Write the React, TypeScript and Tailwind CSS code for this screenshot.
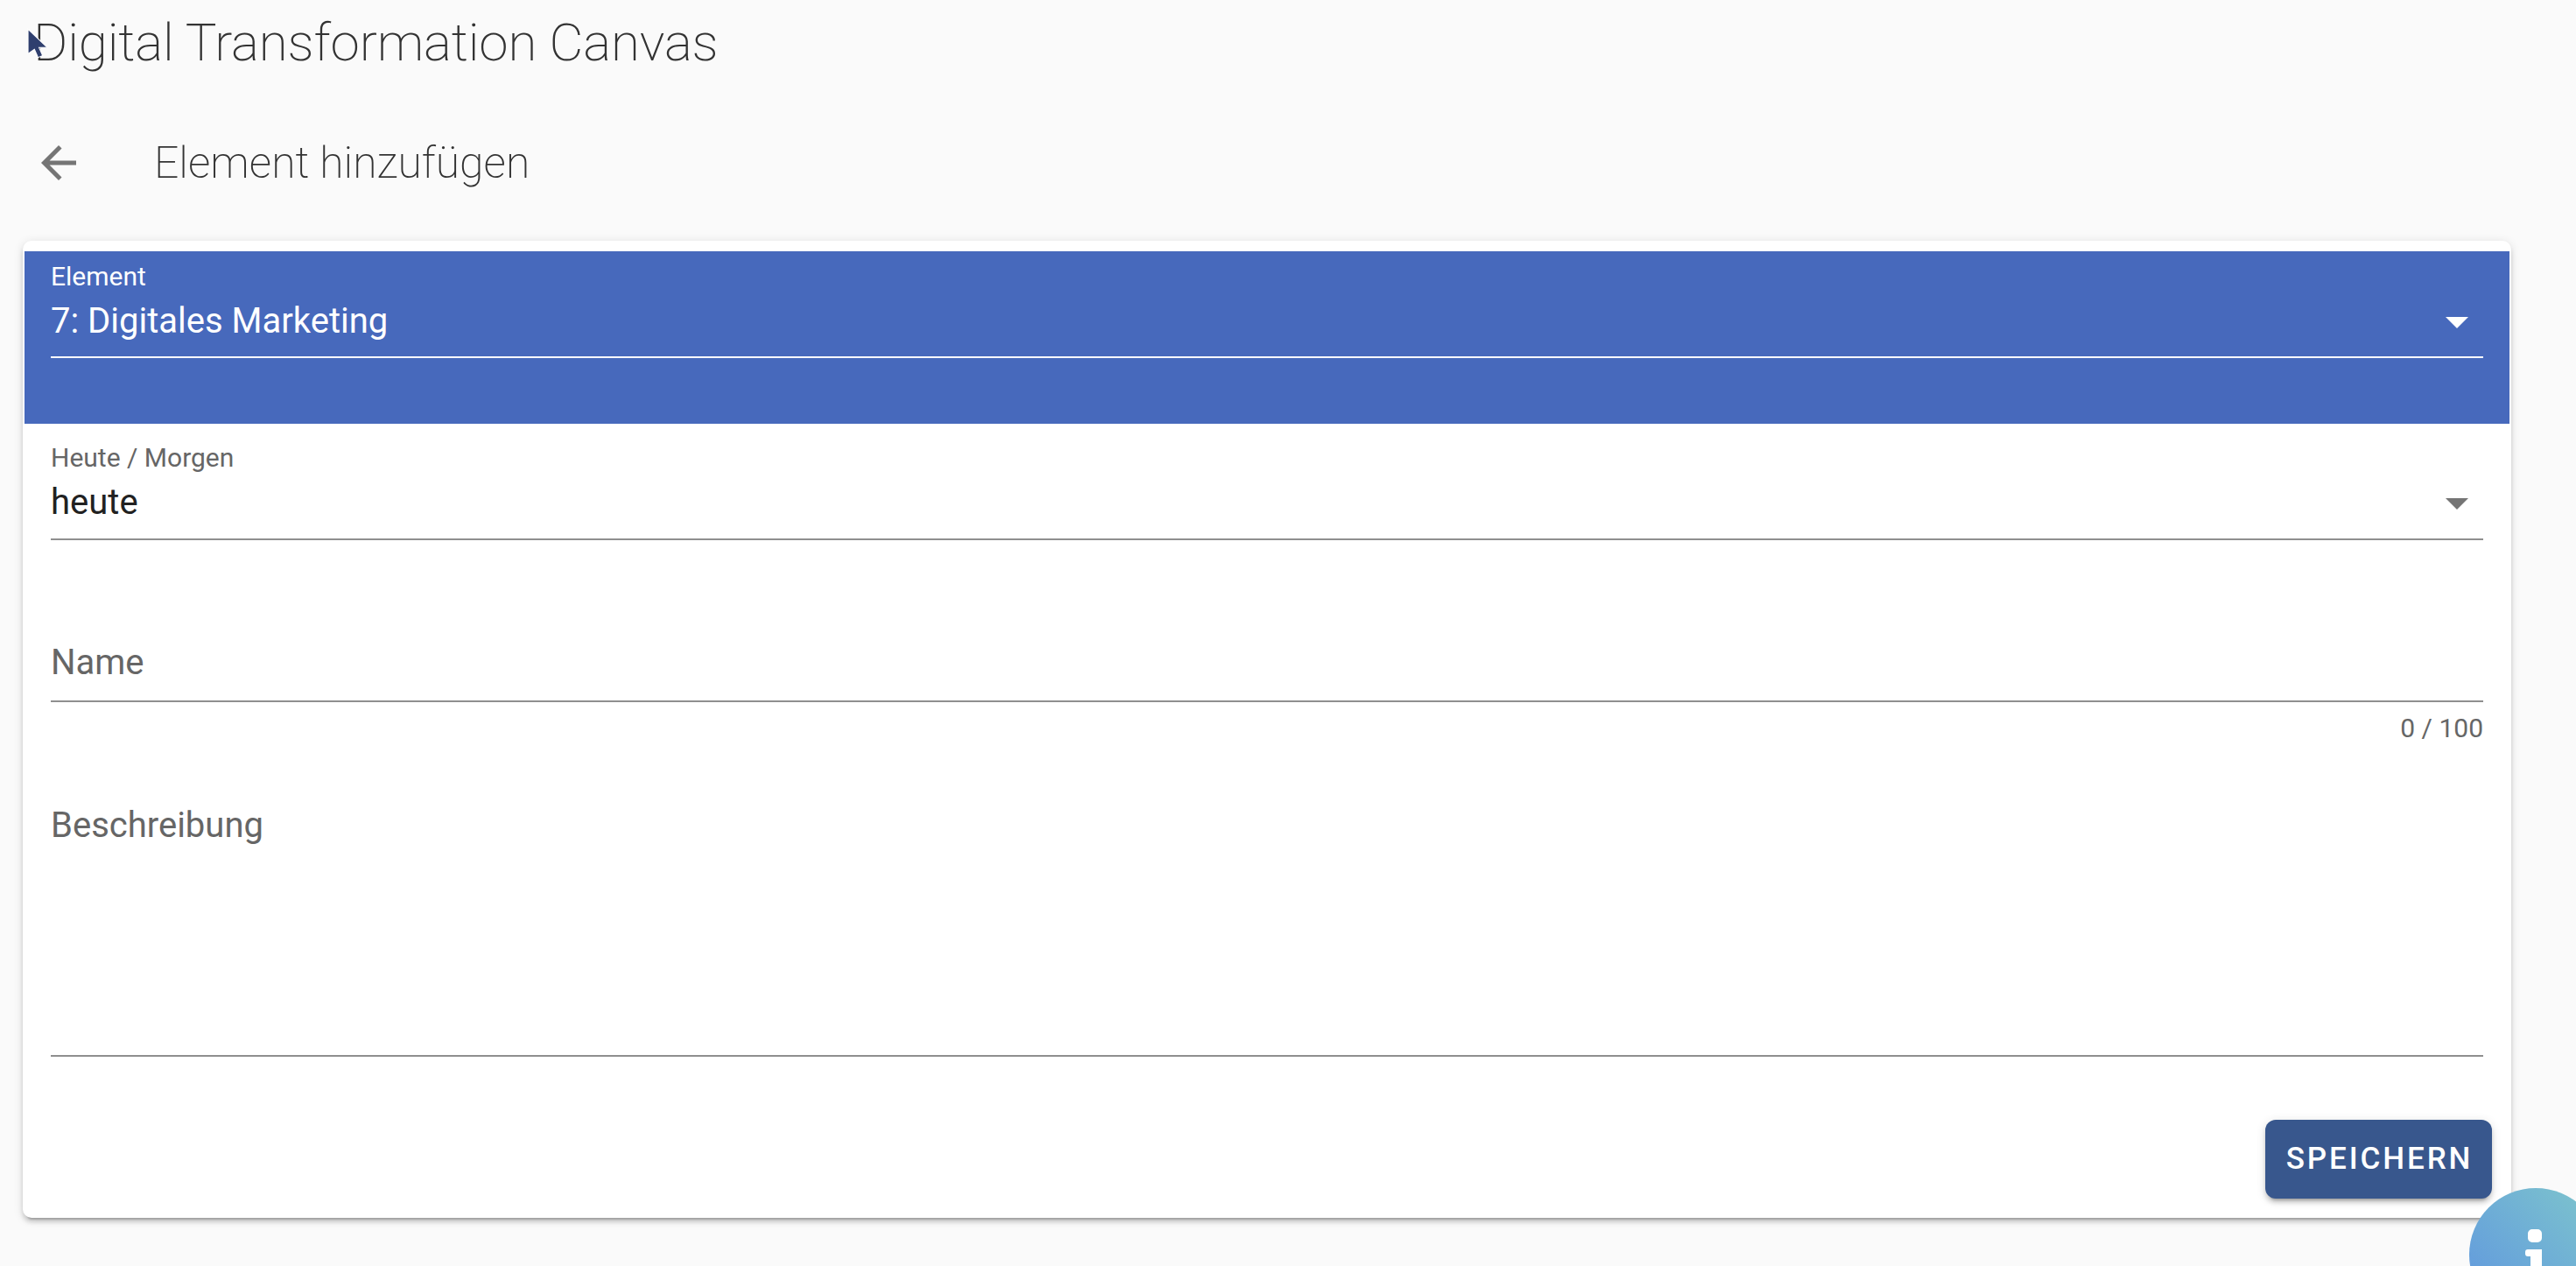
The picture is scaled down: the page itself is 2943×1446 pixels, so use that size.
const FONT = "font-['Roboto','Liberation_Sans',sans-serif]";

function Caret({ className }: { className: string }) {
  return (
    <svg viewBox="0 0 26 13" className={`absolute right-[17px] h-[13px] w-[26px] ${className}`}>
      <path d="M0 0h26L13 13z" fill="currentColor" />
    </svg>
  );
}

function SelectField({
  label,
  value,
  inverted = false,
}: {
  label: string;
  value: string;
  inverted?: boolean;
}) {
  return (
    <div className="relative h-[122px]">
      <div
        className={`h-[36px] text-[30px] leading-[36px] ${inverted ? "text-white" : "text-[#666666]"}`}
      >
        {label}
      </div>
      <div
        className={`mt-[9px] h-[48px] text-[40px] leading-[48px] ${inverted ? "text-white" : "text-[#212121]"}`}
      >
        {value}
      </div>
      <Caret className={`top-[64px] ${inverted ? "text-white" : "text-[#757575]"}`} />
      <div className={`h-[2px] ${inverted ? "mt-[16px] bg-white" : "mt-[17px] bg-[#8f8f8f]"}`} />
    </div>
  );
}

export default function App() {
  return (
    <div className={`relative h-screen w-full overflow-hidden bg-[#fafafa] ${FONT}`}>
      <h1 className="h-[80px] pl-[38px] pt-[14px] text-[60px] font-extralight leading-[70px] tracking-[-0.15px] text-[#333333]">
        Digital Transformation Canvas
      </h1>

      <div className="flex h-[104px] items-center pt-[106px]">
        <svg viewBox="0 0 24 24" className="ml-[37px] h-[60px] w-[60px] text-[#757575]">
          <path
            fill="currentColor"
            d="M20 11H7.83l5.59-5.59L12 4l-8 8 8 8 1.41-1.41L7.83 13H20v-2z"
          />
        </svg>
        <h2 className="ml-[79px] text-[49.8px] font-extralight text-[#333333]">Element hinzufügen</h2>
      </div>

      <div className="ml-[26px] mt-[89px] h-[1116px] w-[2843px] rounded-[10px] bg-white pt-[12px] shadow-[0_7px_2px_-5px_rgba(0,0,0,0.2),0_5px_5px_0_rgba(0,0,0,0.14),0_2px_12px_0_rgba(0,0,0,0.12)]">
        <div className="mx-[2px] h-[197px] bg-[#4769bc] pl-[30px] pr-[30px] pt-[11px]">
          <SelectField label="Element" value="7: Digitales Marketing" inverted />
        </div>

        <div className="px-[32px] pt-[21px]">
          <SelectField label="Heute / Morgen" value="heute" />

          <div className="mt-[96px] h-[79px] border-b-2 border-[#8f8f8f] text-[40px] leading-[48px] text-[#666666]">
            <div className="pt-[10px]">Name</div>
          </div>
          <div className="mt-[12px] h-[36px] text-right text-[30px] leading-[36px] text-[#666666]">
            0 / 100
          </div>

          <div className="mt-[59px] h-[298px] border-b-2 border-[#8f8f8f] pt-[10px] text-[40px] leading-[48px] text-[#666666]">
            Beschreibung
          </div>

          <div className="mt-[72px] flex justify-end">
            <button
              type="button"
              className="-mr-[10px] h-[90px] w-[259px] rounded-[12px] bg-[#38578d] pl-[2px] text-[35px] font-medium tracking-[2.9px] text-white shadow-[0_7px_3px_-5px_rgba(0,0,0,0.2),0_5px_5px_0_rgba(0,0,0,0.14),0_2px_12px_0_rgba(0,0,0,0.12)]"
            >
              SPEICHERN
            </button>
          </div>
        </div>
      </div>

      {/* floating info button, runs off the corner of the window */}
      <div className="absolute left-[2821px] top-[1357px] h-[152px] w-[152px] rounded-full bg-gradient-to-tr from-[#5f93df] to-[#7fc6cb]">
        <svg viewBox="0 0 24 48" className="absolute left-[64px] top-[47px] h-[48px] w-[24px]">
          <path
            fill="white"
            d="M8 0h6a5 5 0 0 1 5 5v5a5 5 0 0 1-5 5H8a5 5 0 0 1-5-5V5a5 5 0 0 1 5-5zM3 23h16v25H6V31H3a3 3 0 0 1-3-3v-2a3 3 0 0 1 3-3z"
          />
        </svg>
      </div>

      {/* captured mouse pointer */}
      <svg viewBox="0 0 24 34" className="absolute left-[31px] top-[32px] h-[36px] w-[25px]">
        <path d="M1 1v27l7-5 4 9 5-2-4-9h9z" fill="#2f3f6e" stroke="#ffffff" strokeWidth="1" />
      </svg>
    </div>
  );
}
